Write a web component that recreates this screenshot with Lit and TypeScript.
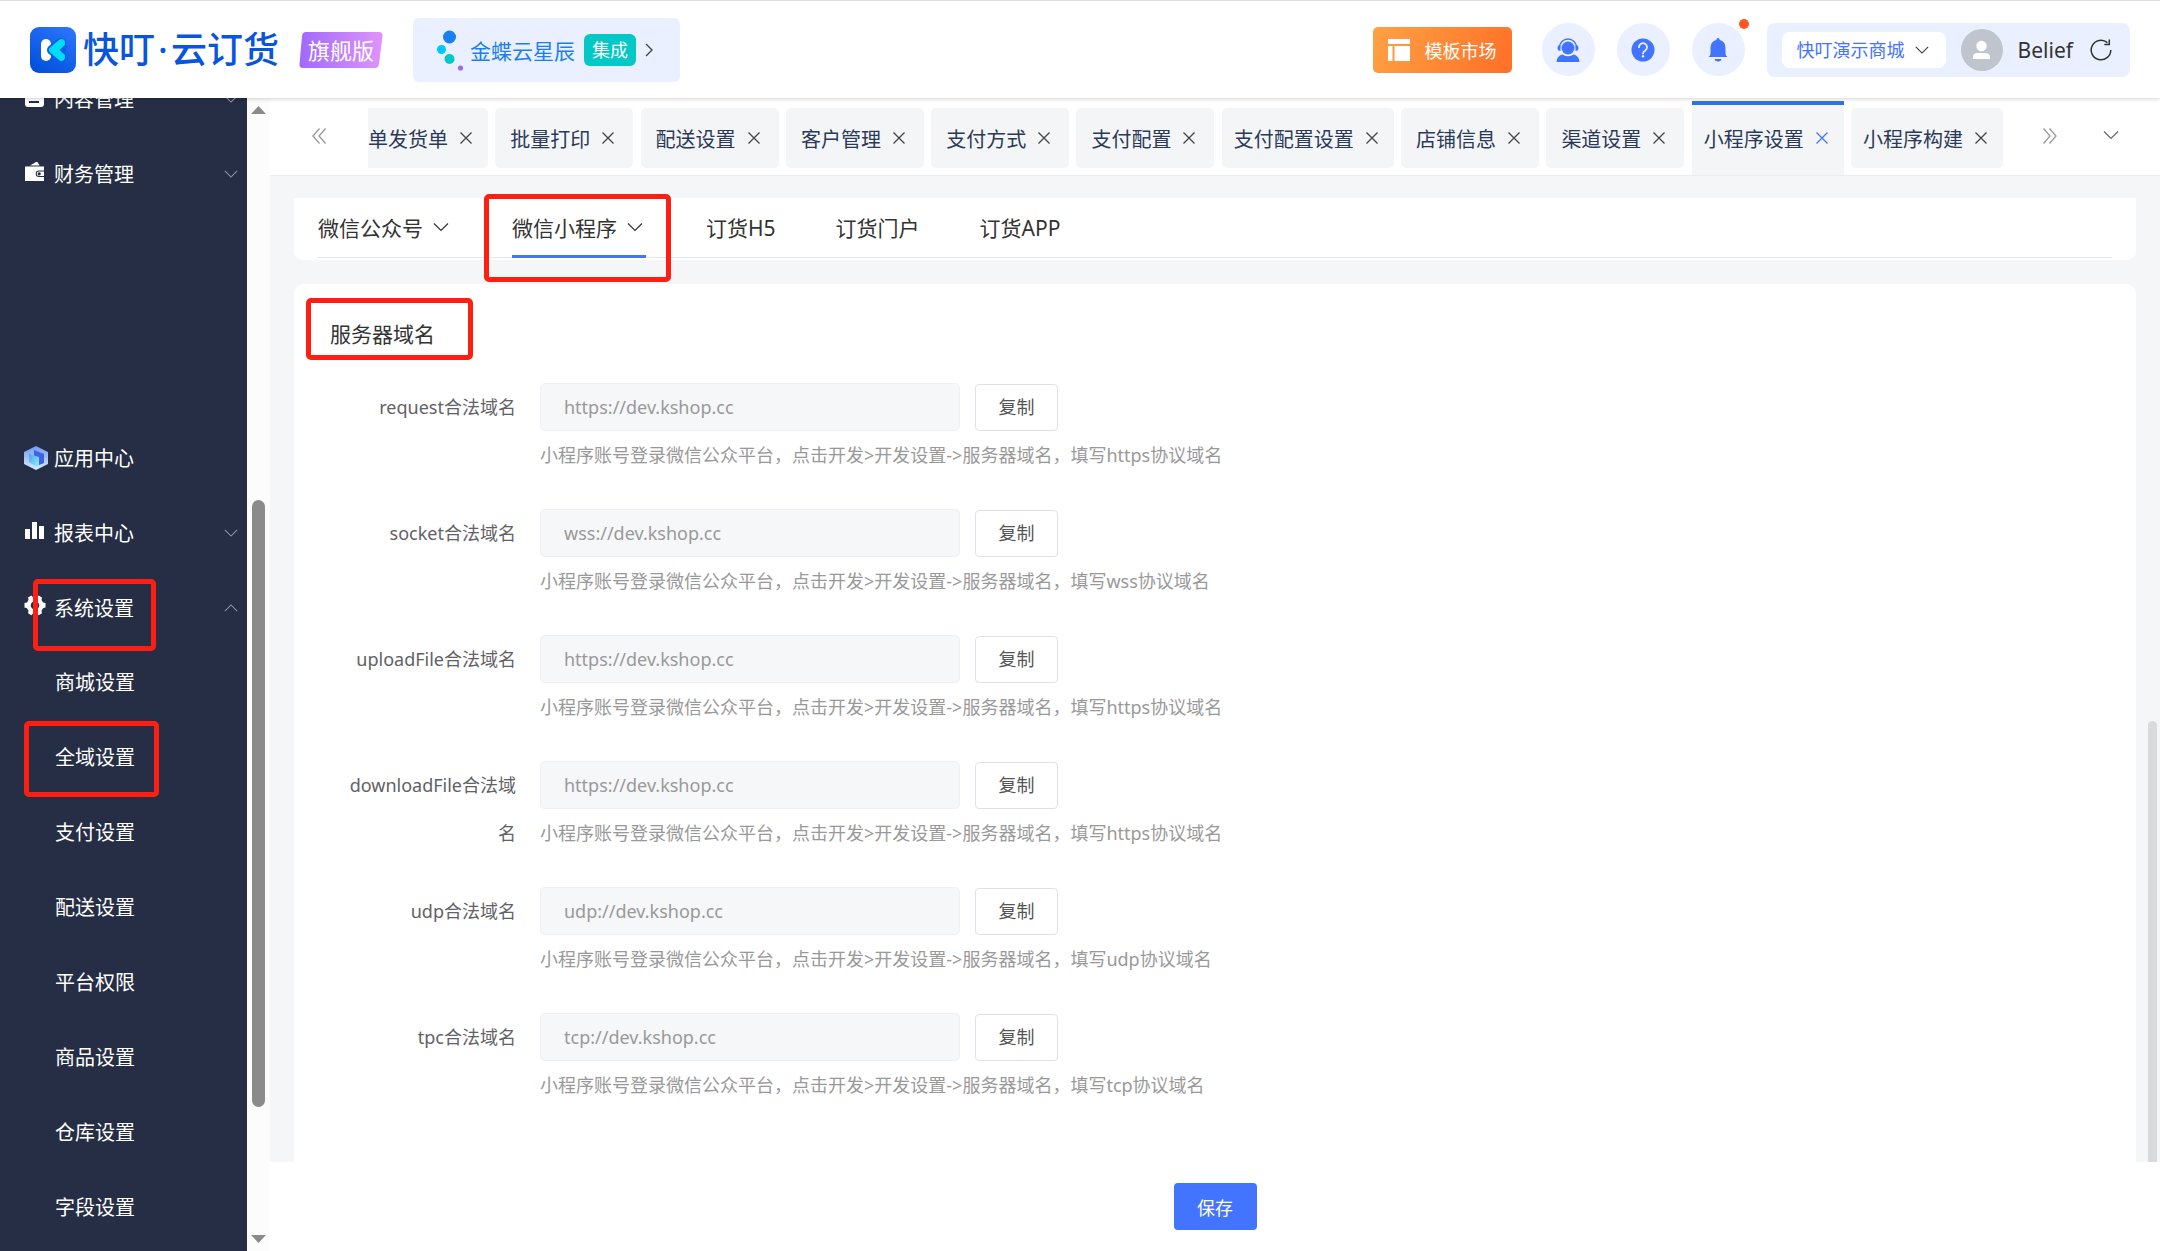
import { LitElement, html, css, svg, nothing } from "lit";
import { customElement, property, state } from "lit/decorators.js";
import { classMap } from "lit/directives/class-map.js";

const FONT = css`"Noto Sans", "Noto Sans CJK SC", sans-serif`;

const reset = css`
  *, *::before, *::after { box-sizing: border-box; }
  button, input, select {
    font: inherit;
    color: inherit;
    margin: 0;
    padding: 0;
    border: 0;
    background: none;
    border-radius: 0;
  }
  button { cursor: pointer; }
  a { color: inherit; text-decoration: none; }
  svg { display: block; flex: none; }
`;

/* red callout frames that lie over the interface */
const callout = css`
  .callout {
    position: absolute;
    border: 5px solid #ff1f12;
    border-radius: 5px;
    pointer-events: none;
    z-index: 3;
  }
`;

const chevronDown = (size = 16) => html`
  <svg width=${size} height=${size} viewBox="0 0 16 16" fill="none" stroke="currentColor" stroke-width="1.2" aria-hidden="true">
    <path d="M1 4.5 L8 11.5 L15 4.5" />
  </svg>`;

const cross = html`
  <svg width="12" height="12" viewBox="0 0 12 12" fill="none" stroke="currentColor" stroke-width="1.3" aria-hidden="true">
    <path d="M0.5 0.5 L11.5 11.5 M11.5 0.5 L0.5 11.5" />
  </svg>`;

const menuIcons: Record<string, unknown> = {
  content: svg`<rect x="1" y="0" width="19" height="21" rx="3" fill="#fff"/><path d="M5 6h11M5 11h10M5 16h10" stroke="#252e45" stroke-width="2"/>`,
  finance: svg`<path d="M6 4.5 L12 1 Q13 .5 13.8 1.6 L15.6 4.5Z" fill="#fff"/><path d="M1 5.5h19v4h-5a3.3 3.3 0 0 0 0 6.600h5v3.900h-19z" fill="#fff"/><path d="M15 10.500h5v4.600h-5a2.300 2.300 0 0 1 0-4.600z" fill="#fff"/><circle cx="15.200" cy="12.800" r="1.600" fill="#252e45"/>`,
  apps: svg`<defs>
      <linearGradient id="hex" x1="0" y1="0" x2="0" y2="1"><stop offset="0" stop-color="#6f9bf2"/><stop offset="1" stop-color="#dcecff"/></linearGradient>
      <linearGradient id="cube" x1="0" y1="0" x2="1" y2="1"><stop offset="0" stop-color="#4fa0f7"/><stop offset="1" stop-color="#8df0f4"/></linearGradient>
    </defs>
    <path d="M12 0 L24 6 V18 L12 24 L0 18 V6Z" fill="url(#hex)"/>
    <path d="M10 4 L20 8 V17 L15 19 L10 9Z" fill="#3f62e6"/>
    <path d="M5 8 L15 11 V20 L11 20 L5 16Z" fill="url(#cube)"/>`,
  report: svg`<path d="M1 9h5v10h-5zM8 2h5v17h-5zM15 6h5v13h-5z" fill="#fff"/>`,
  system: svg`<path fill="#fff" fill-rule="evenodd" d="M7.300 0.500 L9 2.200 H13 L14.700 0.500 L18 2.400 L17.500 4.900 L19 7.500 L21.500 8 V12.500 L19 13.300 L17.500 15.800 L18 18.200 L14.700 20.300 L13 18.600 H9 L7.300 20.300 L4 18.200 L4.500 15.800 L3 13.300 L0.500 12.500 V8 L3 7.500 L4.500 4.900 L4 2.400Z M11 6.200 a4.200 4.200 0 1 0 0.010 0Z"/>`,
};

@customElement("app-header")
export class AppHeader extends LitElement {
  static styles = [reset, css`
    :host {
      display: block;
      position: relative;
      z-index: 5;
      background: #fff;
      border-top: 1px solid #dedede;
      box-shadow: 0 1px 4px rgba(0, 0, 0, 0.18);
      color: #333;
    }
    .bar {
      display: flex;
      align-items: center;
      height: 97px;
      padding: 0 30px;
    }
    .brand { display: flex; align-items: center; gap: 7px; }
    .name {
      display: flex;
      font-size: 36px;
      line-height: 48px;
      font-weight: 500;
      color: #0a55de;
      white-space: nowrap;
    }
    .dot { width: 16px; text-align: center; }
    .edition {
      position: relative;
      isolation: isolate;
      display: grid;
      place-items: center;
      width: 84px;
      height: 36px;
      margin-left: 20px;
      color: #fff;
      font-size: 22px;
      line-height: 32px;
      white-space: nowrap;
    }
    .plate { position: absolute; inset: 0; z-index: -1; }
    .link {
      display: flex;
      align-items: center;
      height: 64px;
      margin-left: 30px;
      padding: 0 27px 0 24px;
      border-radius: 6px;
      background: #eaf0ff;
      font-size: 21px;
      color: #1a80f0;
      white-space: nowrap;
    }
    .link .label { margin-left: 6px; }
    .tag {
      margin: 0 9px;
      padding: 0 8px;
      border-radius: 6px;
      background: #04c8c8;
      color: #fff;
      font-size: 18px;
      line-height: 32px;
    }
    .link .arrow { color: #444; }
    .market {
      display: flex;
      align-items: center;
      gap: 15px;
      height: 46px;
      margin-left: auto;
      padding: 0 15px;
      border-radius: 5px;
      background: linear-gradient(115deg, #ffa245, #ff6f26);
      color: #fff;
      font-size: 18px;
      white-space: nowrap;
    }
    .tools { display: flex; gap: 22px; margin: 0 22px 0 30px; }
    .tool {
      position: relative;
      display: grid;
      place-items: center;
      width: 53px;
      height: 53px;
      border-radius: 50%;
      background: #eaf0ff;
      color: #4274ff;
    }
    .alert {
      position: absolute;
      top: -4px;
      right: -4px;
      width: 10px;
      height: 10px;
      border-radius: 50%;
      background: #ff5722;
    }
    .account {
      display: flex;
      align-items: center;
      height: 54px;
      padding: 0 18px 0 15px;
      border-radius: 8px;
      background: #eaf0ff;
      white-space: nowrap;
    }
    .store {
      position: relative;
      display: flex;
      align-items: center;
      height: 36px;
      border-radius: 8px;
      background: #fff;
      color: #4274ff;
    }
    .store select {
      appearance: none;
      height: 36px;
      padding: 0 41px 0 15px;
      font-size: 18px;
      cursor: pointer;
    }
    .store svg { position: absolute; right: 17px; color: #333; pointer-events: none; }
    .avatar { margin: 0 15px; }
    .user { font-size: 21px; margin-right: 17px; }
  `];

  render() {
    return html`
      <header class="bar">
        <a class="brand" href="#home">
          <svg width="46" height="46" viewBox="0 0 46 46" aria-hidden="true">
            <defs><linearGradient id="logo" x1="0.800" y1="0" x2="0.200" y2="1"><stop offset="0" stop-color="#2b74fa"/><stop offset="1" stop-color="#0050dc"/></linearGradient></defs>
            <rect width="46" height="46" rx="9" fill="url(#logo)"/>
            <path d="M16 17 V29" stroke="#fff" stroke-width="10" stroke-linecap="round"/>
            <path d="M31 16 L22 23 L31 30.500Z" fill="#0a5ae6" stroke="#0a5ae6" stroke-width="10" stroke-linejoin="round"/>
            <path d="M31.500 15.500 L22.500 23 L31.500 30.500Z" fill="#00dcfa" stroke="#00dcfa" stroke-width="7" stroke-linejoin="round"/>
            <path d="M29.500 23 L36 17 V29Z" fill="#0f5ee9"/>
          </svg>
          <span class="name">快叮<span class="dot">·</span>云订货</span>
        </a>
        <span class="edition">
          <svg class="plate" width="84" height="36" viewBox="0 0 84 36" aria-hidden="true">
            <defs><linearGradient id="plate"><stop offset="0" stop-color="#a069ff"/><stop offset="1" stop-color="#df94fa"/></linearGradient></defs>
            <path d="M7 0 H80 Q84 0 83.500 4 L80 32 Q79.500 36 76 36 H4 Q0 36 0.500 32 L3 4 Q3.500 0 7 0Z" fill="url(#plate)"/>
          </svg>
          旗舰版
        </span>
        <a class="link" href="#integration">
          <svg width="27" height="42" viewBox="0 0 27 42" aria-hidden="true">
            <circle cx="12.500" cy="8" r="6.500" fill="#1a80f0"/><circle cx="4.500" cy="20.500" r="4.500" fill="#00c8ff"/>
            <circle cx="12.500" cy="30" r="5" fill="#04c8c8"/><circle cx="23.500" cy="39" r="2.600" fill="#a069f0"/>
          </svg>
          <span class="label">金蝶云星辰</span><span class="tag">集成</span>
          <svg class="arrow" width="8" height="14" viewBox="0 0 8 14" fill="none" stroke="currentColor" stroke-width="1.400" aria-hidden="true"><path d="M1 1 L7 7 L1 13"/></svg>
        </a>
        <button class="market">
          <svg width="22" height="22" viewBox="0 0 22 22" fill="#fff" aria-hidden="true"><path d="M0 0h22v5h-22zM0 7h4.500v15h-4.500zM6.500 7h15.500v15h-15.500z"/></svg>
          模板市场
        </button>
        <div class="tools">
          <button class="tool" aria-label="客服">
            <svg width="24" height="24" viewBox="0 0 24 24" fill="currentColor" aria-hidden="true">
              <circle cx="12" cy="10" r="6.500"/>
              <path d="M3.500 9.500 a8.500 8.500 0 0 1 17 0" fill="none" stroke="currentColor" stroke-width="1.400"/>
              <path d="M4.500 7 v6 a3 3 0 0 1 -3 -3 a3 3 0 0 1 3 -3z M19.500 7 v6 a3 3 0 0 0 3 -3 a3 3 0 0 0 -3 -3z"/>
              <path d="M0.500 24 q0 -5.500 5.500 -7.500 q6 3.500 12 0 q5.500 2 5.500 7.500z"/>
            </svg>
          </button>
          <button class="tool" aria-label="帮助">
            <svg width="24" height="24" viewBox="0 0 24 24" aria-hidden="true">
              <circle cx="12" cy="12" r="11.500" fill="currentColor"/>
              <path d="M8 9.300 a4 4 0 1 1 6.300 3.200 q-2.300 1.500 -2.300 3" fill="none" stroke="#eaf0ff" stroke-width="1.800" stroke-linecap="round"/>
              <circle cx="12" cy="18.300" r="1.200" fill="#eaf0ff"/>
            </svg>
          </button>
          <button class="tool" aria-label="消息">
            <svg width="20" height="24" viewBox="0 0 20 24" fill="currentColor" aria-hidden="true">
              <path d="M10 0 q1.500 0 1.800 2 q5.700 1.500 5.700 8 v5.500 q0 2 2 3.500 H0.500 q2 -1.500 2 -3.500 V10 q0 -6.500 5.700 -8 q0.300 -2 1.800 -2z"/>
              <path d="M6.500 21 h7 q-0.500 2.500 -3.500 2.500 t-3.500 -2.500z"/>
            </svg>
            <span class="alert"></span>
          </button>
        </div>
        <div class="account">
          <span class="store">
            <select aria-label="商城"><option>快叮演示商城</option></select>
            ${chevronDown(14)}
          </span>
          <svg class="avatar" width="42" height="42" viewBox="0 0 42 42" aria-hidden="true">
            <circle cx="21" cy="21" r="21" fill="#c0c4cc"/><circle cx="20.500" cy="17" r="5.200" fill="#fff"/>
            <path d="M12 30 v-2 q0 -4 5 -4 h7 q5 0 5 4 v2z" fill="#fff"/>
          </svg>
          <span class="user">Belief</span>
          <button aria-label="刷新">
            <svg width="22" height="22" viewBox="0 0 22 22" fill="none" stroke="#333" stroke-width="1.500" aria-hidden="true">
              <path d="M20.800 11 a9.800 9.800 0 1 1 -3.400 -7.400"/><path d="M19.300 0.500 v5 h-5"/>
            </svg>
          </button>
        </div>
      </header>`;
  }
}

interface MenuEntry { label: string; icon: string; expandable?: boolean; marked?: boolean; gapAfter?: boolean; children?: { label: string; marked?: boolean }[]; }

const MENU: MenuEntry[] = [
  { label: "内容管理", icon: "content", expandable: true },
  { label: "财务管理", icon: "finance", expandable: true, gapAfter: true },
  { label: "应用中心", icon: "apps" },
  { label: "报表中心", icon: "report", expandable: true },
  {
    label: "系统设置", icon: "system", expandable: true, marked: true,
    children: [
      { label: "商城设置" }, { label: "全域设置", marked: true }, { label: "支付设置" }, { label: "配送设置" },
      { label: "平台权限" }, { label: "商品设置" }, { label: "仓库设置" }, { label: "字段设置" },
    ],
  },
];

@customElement("side-menu")
export class SideMenu extends LitElement {
  static styles = [reset, callout, css`
    :host { display: flex; flex: none; width: 270px; min-height: 0; overflow: hidden; }
    .menu {
      flex: 1;
      overflow: hidden;
      background: #252e45;
      color: #fff;
      font-size: 20px;
    }
    .list, .sub { list-style: none; margin: 0; padding: 0; }
    .list { display: flex; flex-direction: column; gap: 2px; margin-top: -36px; }
    .gap { margin-bottom: 209px; }
    .row {
      position: relative;
      display: flex;
      align-items: center;
      width: 100%;
      height: 73px;
      padding: 0 9px 0 24px;
      text-align: left;
      white-space: nowrap;
    }
    .icon { width: 30px; flex: none; padding-bottom: 4px; }
    .icon.tall { padding-bottom: 0; }
    .text { flex: 1; }
    .fold { color: #8f96a5; }
    .open .fold { transform: rotate(180deg); }
    .leaf {
      position: relative;
      display: flex;
      align-items: center;
      height: 75px;
      padding-left: 55px;
    }
    .row .callout { left: 33px; top: 8px; width: 123px; height: 72px; }
    .leaf .callout { left: 24px; top: 2px; width: 135px; height: 76px; }
    .track {
      display: flex;
      flex-direction: column;
      align-items: center;
      justify-content: space-between;
      width: 23px;
      padding: 8px 0;
      background: #fcfcfc;
    }
    .rail { flex: 1; display: flex; flex-direction: column; width: 13px; }
    .before { flex: 385; }
    .thumb { flex: 606; border-radius: 7px; background: #8b8b8b; }
    .after { flex: 128; }
  `];

  render() {
    return html`
      <nav class="menu">
        <ul class="list">
          ${MENU.map((m) => html`
            <li class=${classMap({ gap: !!m.gapAfter })}>
              <button class=${classMap({ row: true, open: !!m.children })}>
                <span class=${classMap({ icon: true, tall: m.icon === "apps" })}>
                  <svg width=${m.icon === "apps" ? 24 : 22} height=${m.icon === "apps" ? 24 : 22}
                    viewBox=${m.icon === "apps" ? "0 0 24 24" : "0 0 22 22"} aria-hidden="true">${menuIcons[m.icon]}</svg>
                </span>
                <span class="text">${m.label}</span>
                ${m.expandable ? html`<span class="fold">${chevronDown(14)}</span>` : nothing}
                ${m.marked ? html`<span class="callout"></span>` : nothing}
              </button>
              ${m.children ? html`
                <ul class="sub">
                  ${m.children.map((c) => html`<li><a class="leaf" href="#">${c.label}${c.marked ? html`<span class="callout"></span>` : nothing}</a></li>`)}
                </ul>` : nothing}
            </li>`)}
        </ul>
      </nav>
      <div class="track" aria-hidden="true">
        <svg width="15" height="8" viewBox="0 0 15 8"><path d="M7.500 0 L15 8 H0Z" fill="#8b8b8b"/></svg>
        <div class="rail"><span class="before"></span><span class="thumb"></span><span class="after"></span></div>
        <svg width="15" height="8" viewBox="0 0 15 8"><path d="M0 0 H15 L7.500 8Z" fill="#8b8b8b"/></svg>
      </div>`;
  }
}

@customElement("page-tabs")
export class PageTabs extends LitElement {
  @property({ type: Array }) tabs: string[] = ["单发货单", "批量打印", "配送设置", "客户管理", "支付方式", "支付配置", "支付配置设置", "店铺信息", "渠道设置", "小程序设置", "小程序构建"];
  @state() private active = "小程序设置";

  static styles = [reset, css`
    :host { display: block; background: #fff; border-bottom: 1px solid #ebedf0; }
    .bar { display: flex; height: 77px; padding-top: 3px; }
    .move { display: grid; place-items: center; color: #999; padding-bottom: 4px; }
    .prev { width: 98px; }
    .next { width: 94px; }
    .more { width: 63px; padding-right: 36px; padding-bottom: 6px; color: #666; }
    .tabs { flex: 1; display: flex; justify-content: space-between; min-width: 0; overflow: hidden; }
    .tab {
      display: flex;
      align-items: center;
      justify-content: center;
      gap: 12px;
      min-width: 138px;
      height: 60px;
      margin-top: 7px;
      padding: 0 16px 0 12px;
      border-radius: 5px;
      background: #f4f5f7;
      color: #2b3a58;
      font-size: 20px;
      white-space: nowrap;
    }
    .tab:first-child { min-width: 0; padding-left: 0; border-radius: 0 5px 5px 0; }
    .tab.active {
      height: 74px;
      margin-top: 0;
      padding-bottom: 4px;
      border-top: 4px solid #2a74ea;
      border-radius: 0;
    }
    .close { color: #444; }
    .active .close { color: #4274ff; }
  `];

  render() {
    return html`
      <div class="bar">
        <button class="move prev" aria-label="向左">
          <svg width="14" height="16" viewBox="0 0 14 16" fill="none" stroke="currentColor" stroke-width="1.300" aria-hidden="true"><path d="M7.500 0.500 L1 8 L7.500 15.500 M13.500 0.500 L7 8 L13.500 15.500"/></svg>
        </button>
        <div class="tabs">
          ${this.tabs.map((t) => html`
            <div class=${classMap({ tab: true, active: t === this.active })}>
              <button @click=${() => (this.active = t)}>${t}</button>
              <button class="close" aria-label="关闭${t}">${cross}</button>
            </div>`)}
        </div>
        <button class="move next" aria-label="向右">
          <svg width="14" height="16" viewBox="0 0 14 16" fill="none" stroke="currentColor" stroke-width="1.300" aria-hidden="true"><path d="M0.500 0.500 L7 8 L0.500 15.500 M6.500 0.500 L13 8 L6.500 15.500"/></svg>
        </button>
        <button class="move more" aria-label="更多">${chevronDown(16)}</button>
      </div>`;
  }
}

const CHANNELS = [
  { label: "微信公众号", menu: true },
  { label: "微信小程序", menu: true, active: true },
  { label: "订货H5" },
  { label: "订货门户" },
  { label: "订货APP" },
];

const DOMAINS = ["request", "socket", "uploadFile", "downloadFile", "udp", "tpc"];
const PROTOCOLS = ["https", "wss", "https", "https", "udp", "tcp"];

@customElement("domain-settings")
export class DomainSettings extends LitElement {
  static styles = [reset, callout, css`
    :host { display: flex; flex-direction: column; flex: 1; min-height: 0; }
    .view { display: flex; flex: 1; min-height: 0; background: #f5f6f8; }
    .pages {
      flex: 1;
      display: flex;
      flex-direction: column;
      gap: 24px;
      min-width: 0;
      padding: 22px 0 0 24px;
    }
    .channels {
      padding: 0 24px 2px;
      border-radius: 0 0 9px 9px;
      background: #fff;
    }
    .strip { display: flex; gap: 60px; height: 60px; border-bottom: 1px solid #e4e7ed; }
    .channel {
      position: relative;
      display: flex;
      align-items: center;
      gap: 10px;
      height: 60px;
      border-bottom: 3px solid transparent;
      font-size: 21px;
      color: #333;
      white-space: nowrap;
    }
    .channel svg { margin-right: 3px; }
    .channel.active { border-bottom-color: #4274ff; }
    .channel .callout { left: -28px; top: -4px; width: 187px; height: 88px; }
    .card {
      flex: 1;
      min-height: 0;
      overflow: hidden;
      padding: 29px 36px 0;
      border-radius: 10px 10px 0 0;
      background: #fff;
    }
    .title {
      position: relative;
      width: max-content;
      margin: 0 0 28px;
      font-size: 21px;
      font-weight: 400;
      line-height: 42px;
      color: #333;
    }
    .title .callout { left: -24px; top: -15px; width: 167px; height: 62px; }
    .field { display: flex; align-items: flex-start; margin-bottom: 30px; font-size: 18px; line-height: 48px; }
    .field label {
      width: 210px;
      padding: 0 24px 0 10px;
      text-align: right;
      word-break: break-all;
      color: #606266;
    }
    .control { display: flex; align-items: center; gap: 15px; }
    .control input {
      width: 420px;
      height: 48px;
      padding: 0 23px;
      border: 1px solid #eef0f3;
      border-radius: 5px;
      background: #f5f7f9;
      color: #999;
      outline: none;
    }
    .copy {
      width: 83px;
      height: 47px;
      border: 1px solid #dfe1e6;
      border-radius: 4px;
      line-height: 24px;
      color: #555;
    }
    .hint { margin: 0; color: #999; white-space: nowrap; }
    .track { display: flex; flex-direction: column; width: 12px; margin-left: 12px; padding-right: 3px; }
    .track .before { flex: 545; }
    .track .thumb { flex: 441; border-radius: 5px 5px 0 0; background: #d9dadc; }
    .footer { display: grid; place-items: center; height: 89px; background: #fff; }
    .save {
      width: 83px;
      height: 47px;
      border-radius: 4px;
      background: #4274ff;
      color: #fff;
      font-size: 18px;
    }
  `];

  render() {
    return html`
      <div class="view">
        <div class="pages">
          <nav class="channels">
            <div class="strip">
              ${CHANNELS.map((c) => html`
                <button class=${classMap({ channel: true, active: !!c.active })}>
                  <span>${c.label}</span>${c.menu ? chevronDown(16) : nothing}
                  ${c.active ? html`<span class="callout"></span>` : nothing}
                </button>`)}
            </div>
          </nav>
          <form class="card" @submit=${(e: Event) => e.preventDefault()}>
            <h2 class="title">服务器域名<span class="callout"></span></h2>
            ${DOMAINS.map((d, i) => html`
              <div class="field">
                <label for=${d}>${d}合法域名</label>
                <div>
                  <div class="control">
                    <input id=${d} type="text" readonly .value=${`${PROTOCOLS[i]}://dev.kshop.cc`} />
                    <button type="button" class="copy">复制</button>
                  </div>
                  <p class="hint">小程序账号登录微信公众平台，点击开发>开发设置->服务器域名，填写${PROTOCOLS[i]}协议域名</p>
                </div>
              </div>`)}
          </form>
        </div>
        <div class="track" aria-hidden="true"><span class="before"></span><span class="thumb"></span></div>
      </div>
      <footer class="footer"><button class="save">保存</button></footer>`;
  }
}

@customElement("app-root")
export class AppRoot extends LitElement {
  static styles = [reset, css`
    :host {
      display: flex;
      flex-direction: column;
      height: 100vh;
      overflow: hidden;
      font-family: ${FONT};
      background: #fff;
    }
    .body { display: flex; flex: 1; min-height: 0; }
    .main { flex: 1; display: flex; flex-direction: column; min-width: 0; }
  `];

  render() {
    return html`
      <app-header></app-header>
      <div class="body">
        <side-menu></side-menu>
        <main class="main">
          <page-tabs></page-tabs>
          <domain-settings></domain-settings>
        </main>
      </div>`;
  }
}
